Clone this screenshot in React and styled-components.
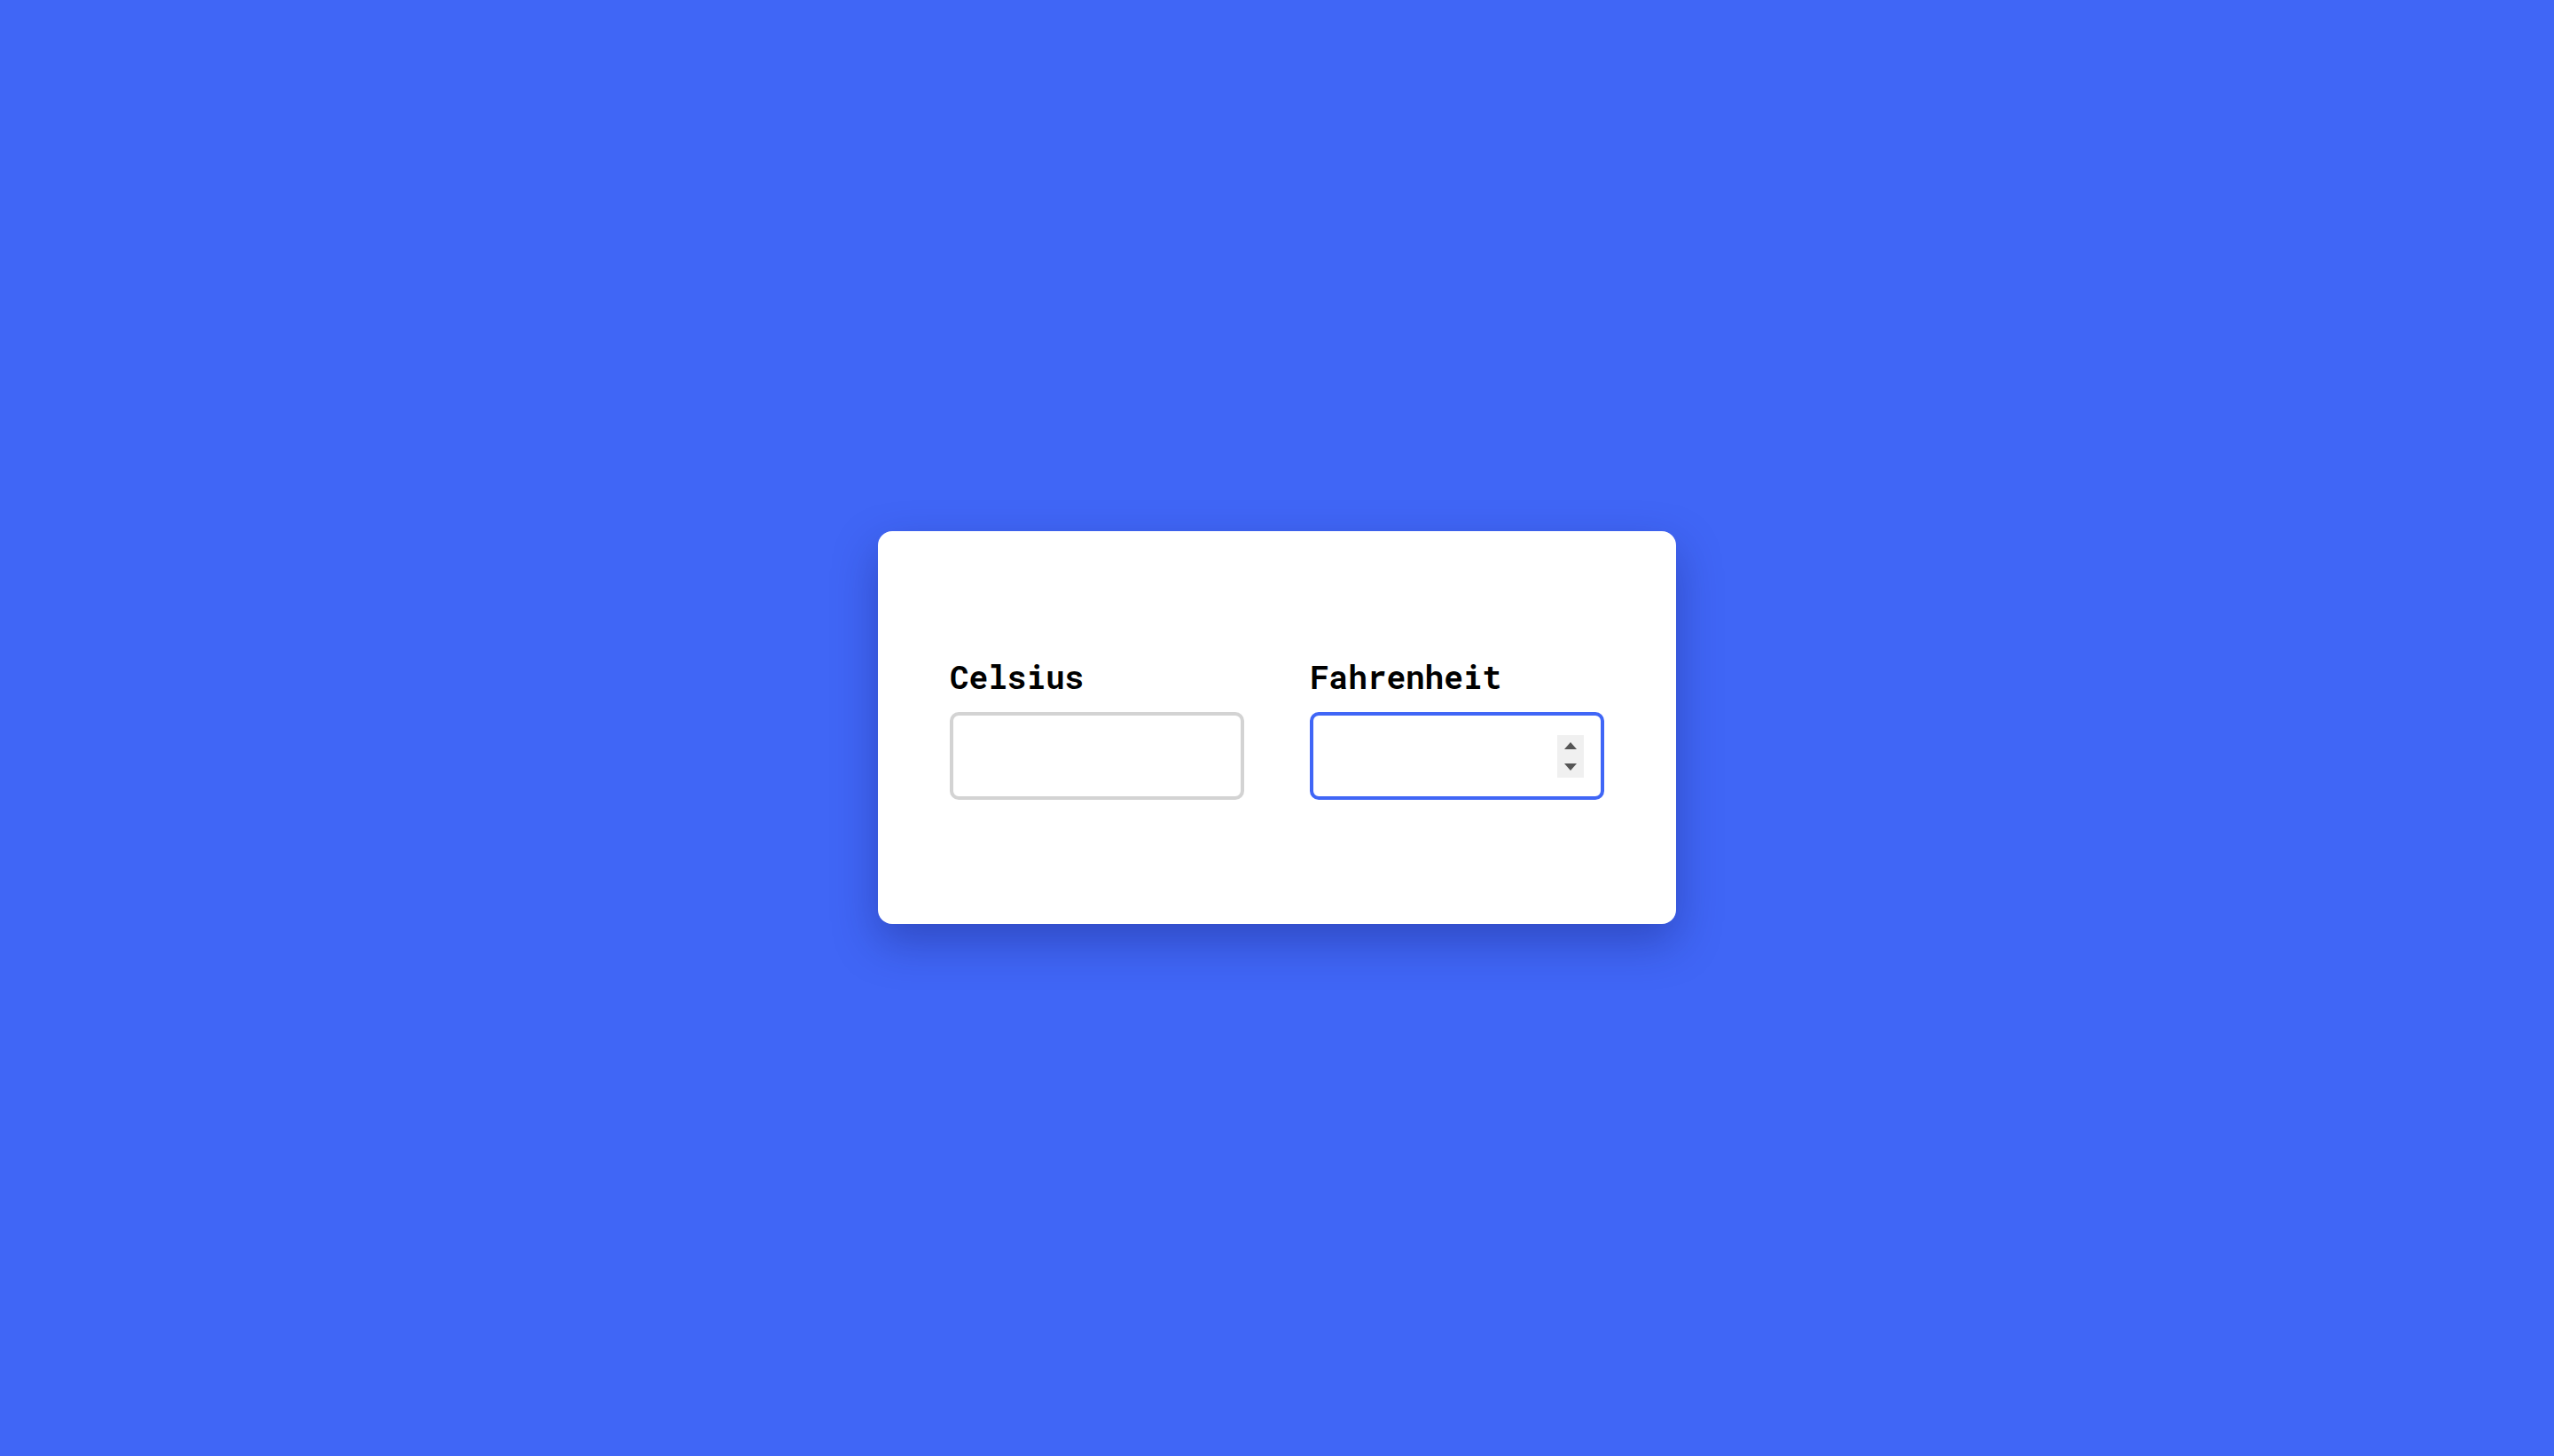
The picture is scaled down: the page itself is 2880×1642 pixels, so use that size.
import React from 'react';
import styled, { createGlobalStyle } from 'styled-components';

const GlobalStyle = createGlobalStyle`
  html, body {
    margin: 0;
    padding: 0;
    height: 100%;
  }

  body {
    background-color: #4066f6;
    font-family: 'Roboto Mono', 'DejaVu Sans Mono', monospace;
  }

  #root {
    height: 100%;
  }
`;

const Page = styled.div`
  display: flex;
  align-items: flex-start;
  justify-content: center;
  width: 100%;
  min-height: 100vh;
  padding-top: 599px;
  box-sizing: border-box;
`;

const Card = styled.form`
  display: flex;
  gap: 74px;
  width: 900px;
  height: 443px;
  box-sizing: border-box;
  padding: 142px 81px 0;
  background-color: #fff;
  border-radius: 16px;
  box-shadow: 0 20px 50px rgba(20, 30, 110, 0.38);
`;

const Field = styled.div`
  display: flex;
  flex-direction: column;
  width: 332px;
`;

const Label = styled.label`
  display: block;
  font-size: 36px;
  font-weight: bold;
  line-height: 44px;
  color: #000;
  margin-bottom: 18px;
`;

const InputWrap = styled.div`
  position: relative;
  width: 332px;
  height: 99px;
`;

const NumberInput = styled.input`
  width: 100%;
  height: 100%;
  box-sizing: border-box;
  padding: 0 20px;
  font-size: 36px;
  font-family: inherit;
  border: 4px solid ${props => (props.$active ? '#4066f6' : '#d3d3d3')};
  border-radius: 10px;
  outline: none;
  background: #fff;
  -moz-appearance: textfield;

  &::-webkit-outer-spin-button,
  &::-webkit-inner-spin-button {
    -webkit-appearance: none;
    margin: 0;
  }
`;

const Spinner = styled.div`
  position: absolute;
  top: 26px;
  right: 23px;
  width: 30px;
  height: 48px;
  background-color: #f0f0f0;
  display: flex;
  flex-direction: column;
  align-items: center;
  justify-content: center;
  gap: 16px;
`;

const Arrow = styled.span`
  width: 0;
  height: 0;
  border-left: 7.5px solid transparent;
  border-right: 7.5px solid transparent;
  ${props => (props.$down
    ? 'border-top: 8px solid #555;'
    : 'border-bottom: 8px solid #555;')}
`;

const TemperatureConverter = () => {
  return (
    <Page>
      <GlobalStyle />
      <Card>
        <Field>
          <Label htmlFor="celsius">Celsius</Label>
          <InputWrap>
            <NumberInput id="celsius" type="number" />
          </InputWrap>
        </Field>
        <Field>
          <Label htmlFor="fahrenheit">Fahrenheit</Label>
          <InputWrap>
            <NumberInput id="fahrenheit" type="number" $active />
            <Spinner>
              <Arrow />
              <Arrow $down />
            </Spinner>
          </InputWrap>
        </Field>
      </Card>
    </Page>
  );
};

export default TemperatureConverter;
